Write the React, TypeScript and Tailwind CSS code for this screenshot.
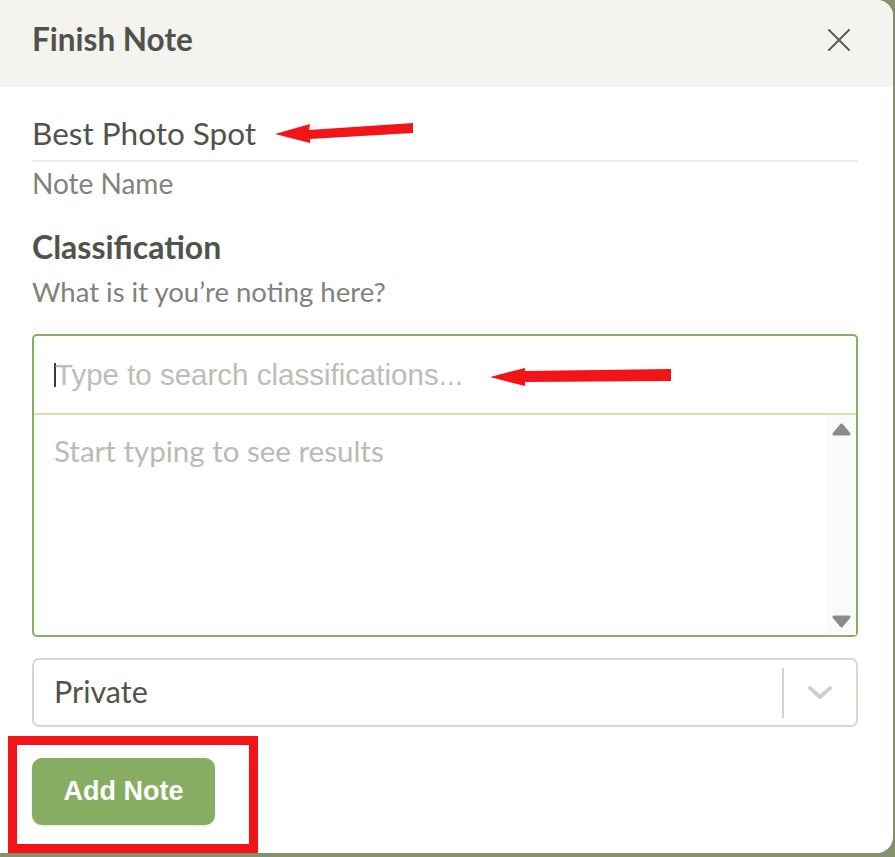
import React from "react";

const lato = { fontFamily: "Lato, 'Noto Sans', sans-serif" };

const CloseIcon = () => (
  <svg width="22" height="22" viewBox="0 0 22 22" className="text-[#5b5d58]">
    <path d="M1 1 L21 21 M21 1 L1 21" stroke="currentColor" strokeWidth="2" strokeLinecap="round" />
  </svg>
);

const Chevron = () => (
  <svg width="26" height="17" viewBox="0 0 26 17">
    <path d="M3 3 L13 12 L23 3" fill="none" stroke="#cfcfcc" strokeWidth="4" strokeLinecap="round" strokeLinejoin="round" />
  </svg>
);

const Tri = ({ down }: { down?: boolean }) => (
  <svg width="19" height="13" viewBox="0 0 19 13">
    <path
      d={down ? "M2 2 L17 2 L9.5 11 Z" : "M2 11 L17 11 L9.5 2 Z"}
      fill="#8b8b8b"
      stroke="#8b8b8b"
      strokeWidth="3"
      strokeLinejoin="round"
    />
  </svg>
);

// red markup drawn on top of the screenshot
const Arrow = ({ className, points }: { className: string; points: string }) => (
  <svg className={className} width="200" height="30" viewBox="0 0 200 30">
    <polygon points={points} fill="#f31418" />
  </svg>
);

export default function App() {
  return (
    <div className="w-[895px] h-[857px] bg-[#86906c] relative overflow-hidden" style={lato}>
      <div className="w-[893px] h-[853px] bg-white rounded-r-[16px] overflow-hidden flex flex-col">
        <div className="h-[87px] bg-[#f4f3ef] flex items-center justify-between pl-8 pr-[43px] pb-[7px]">
          <h2 className="text-[31.5px] font-bold text-[#50534c] leading-none">Finish Note</h2>
          <CloseIcon />
        </div>

        <div className="pl-8 pr-[35px] flex flex-col">
          <div className="mt-[26px] border-b-2 border-[#efeee9] pb-[7px] text-[31.5px] leading-[40px] text-[#50534c]">
            Best Photo Spot
          </div>
          <div className="mt-[5px] text-[28px] leading-[32px] text-[#80837a]">Note Name</div>

          <div className="mt-[30px] text-[32px] leading-[36px] font-bold text-[#50534c]">Classification</div>
          <div className="mt-[11px] text-[27.5px] leading-[32px] text-[#80837a]">What is it you’re noting here?</div>

          <div className="mt-[26px] h-[303px] border-2 border-[#87ad62] rounded-[5px] flex flex-col">
            <div className="h-[79px] border-b-2 border-[#d3e3a6] flex items-center pl-5">
              <span className="w-[2px] h-[24px] bg-[#3a3a3a]" />
              <span
                className="text-[29.5px] text-[#bdbdb8] leading-none -ml-[1px]"
                style={{ fontFamily: "'Liberation Sans', Arial, sans-serif" }}
              >
                Type to search classifications...
              </span>
            </div>
            <div className="flex-1 flex">
              <div className="flex-1 pl-5 pt-[20px] text-[29.5px] leading-[32px] text-[#b9bbb4]">
                Start typing to see results
              </div>
              <div className="w-[29px] bg-[#fafafa] flex flex-col items-center justify-between pt-[8px] pb-[7px]">
                <Tri />
                <Tri down />
              </div>
            </div>
          </div>

          <div className="mt-[21px] h-[69px] border-2 border-[#d8d8cf] rounded-[7px] flex items-center">
            <div className="flex-1 pl-5 text-[30.5px] text-[#50534c] leading-none pb-[2px]">Private</div>
            <div className="w-[2px] h-[50px] bg-[#d3d3cf]" />
            <div className="w-[72px] flex justify-center pt-[2px]">
              <Chevron />
            </div>
          </div>

          <div className="mt-[31px]">
            <button
              className="w-[183px] h-[67px] rounded-[10px] bg-[#86ad62] text-white text-[27px] font-bold shadow-sm"
              style={{ fontFamily: "'Liberation Sans', Arial, sans-serif" }}
            >
              Add Note
            </button>
          </div>
        </div>
      </div>

      <div className="absolute left-[8px] top-[736px] w-[250px] h-[117px] border-[9px] border-[#f31418]" />
      <Arrow className="absolute left-[275px] top-[113px]" points="0,21 35,11 34,17 138,10 138,20 35,26 35,30" />
      <Arrow className="absolute left-[490px] top-[356px]" points="0,21 35,12 35,15 181,13 181,25 35,26 35,30" />
    </div>
  );
}
